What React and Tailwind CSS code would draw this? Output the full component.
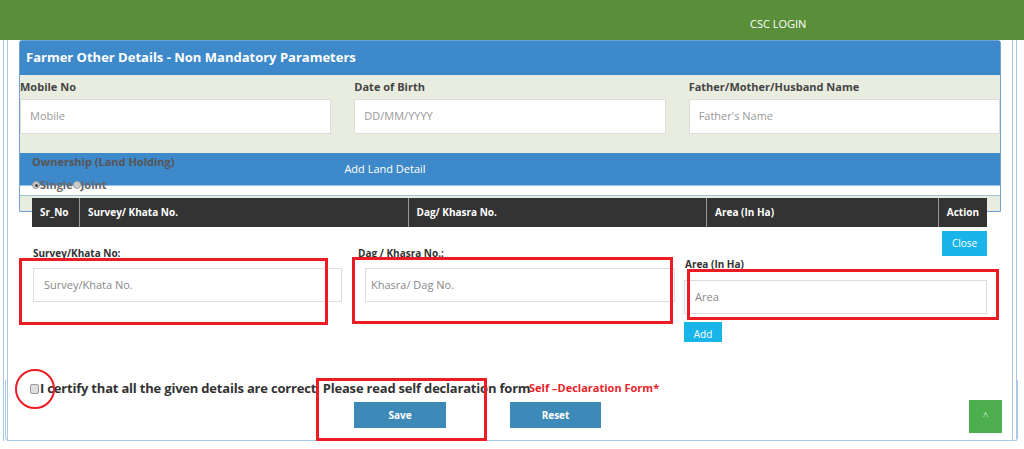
export default function App() {
  const f = { fontFamily: '"Open Sans", "Liberation Sans", sans-serif' };
  return (
    <div style={f} className="relative w-[1024px] h-[449px] overflow-hidden bg-white text-[#333]">
      <div className="h-[40px] bg-[#5a8f39] relative">
        <span className="absolute left-[750px] top-[16px] text-[11px] text-white">CSC LOGIN</span>
      </div>
      {/* outer frame lines */}
      <div className="absolute left-[3px] top-[40px] bottom-[8px] w-[5px] border-x border-[#a9c8e6]" />
      <div className="absolute left-[1012px] top-[40px] bottom-[8px] w-[5px] border-x border-[#a9c8e6]" />
      <div className="absolute left-[5px] right-[6px] top-[380px] h-[61px] border border-t-0 border-[#a9c8e6] rounded-b-[4px]" />

      <div className="ml-[19px] w-[982px] border border-[#6ea3d4] rounded-t-[3px]">
        <div className="h-[34px] bg-[#3e89c9] flex items-center pl-[6px] text-white font-bold text-[13px]">Farmer Other Details - Non Mandatory Parameters</div>
        <div className="bg-[#e8ede0] h-[78px] grid grid-cols-3 gap-[23px]">
          {[["Mobile No","Mobile"],["Date of Birth","DD/MM/YYYY"],["Father/Mother/Husband Name","Father's Name"]].map(([l,p])=>(
            <div key={l} className="pt-[4px]">
              <div className="text-[11px] font-bold h-[20px] text-[#444]">{l}</div>
              <div className="h-[35px] bg-white border border-[#ddd] flex items-center pl-[9px] text-[11px] text-[#999]">{p}</div>
            </div>
          ))}
        </div>
        <div className="relative h-[32px] bg-[#3e89c9] flex items-center justify-center pr-[250px] text-white text-[11px]">
          Add Land Detail
          <span className="absolute left-[12px] top-[1px] text-[11px] font-bold text-[#555]">Ownership (Land Holding)</span>
        </div>
        <div className="relative h-[11px] bg-white border-y border-[#9fc2e2]">
          <span className="absolute left-[12px] top-[-9px] flex items-center text-[11px] font-bold text-[#666]">
            <span className="w-[8px] h-[8px] rounded-full bg-[#ccc] border border-[#999] flex items-center justify-center"><span className="w-[3px] h-[3px] rounded-full bg-[#444]"/></span>Single
            <span className="w-[8px] h-[8px] rounded-full bg-[#ccc] border border-[#aaa]"/>Joint
          </span>
        </div>
        <div className="h-[15px] bg-[#e8ede0]" />
      </div>

      <div className="absolute left-[32px] top-[198px] w-[955px] h-[29px] bg-[#333] flex text-white text-[10px] font-bold">
        {[["Sr_No","w-[47px]"],["Survey/ Khata No.","w-[329px]"],["Dag/ Khasra No.","w-[299px]"],["Area (In Ha)","w-[232px]"],["Action","flex-1"]].map(([t,w],i)=>(
          <div key={t} className={`${w} flex items-center px-[8px] ${i?"border-l border-[#999]":""}`}>{t}</div>
        ))}
      </div>
      <div className="absolute left-[942px] top-[231px] w-[45px] h-[25px] bg-[#1ab5e8] text-white text-[10px] flex items-center justify-center">Close</div>

      <div className="absolute left-[33px] top-[246px] text-[10px] font-bold">Survey/Khata No:</div>
      <div className="absolute left-[358px] top-[246px] text-[10px] font-bold">Dag / Khasra No.:</div>
      <div className="absolute left-[685px] top-[257px] text-[10px] font-bold">Area (In Ha)</div>
      <div className="absolute left-[33px] top-[268px] w-[309px] h-[34px] bg-white border border-[#ddd] flex items-center pl-[10px] text-[11px] text-[#888]">Survey/Khata No.</div>
      <div className="absolute left-[365px] top-[268px] w-[310px] h-[34px] bg-white border border-[#ddd] flex items-center pl-[5px] text-[11px] text-[#888]">Khasra/ Dag No.</div>
      <div className="absolute left-[684px] top-[280px] w-[303px] h-[34px] bg-white border border-[#ddd] flex items-center pl-[10px] text-[11px] text-[#888]">Area</div>
      <div className="absolute left-[684px] top-[322px] w-[38px] h-[20px] bg-[#1ab5e8] text-white text-[10px] flex items-end justify-center">Add</div>

      <div className="absolute left-[30px] top-[384px] w-[9px] h-[10px] bg-[#ddd] border border-[#999] rounded-[2px]" />
      <div className="absolute left-[40px] top-[379px] text-[13px] font-bold text-[#333] tracking-[-0.2px]">I certify that all the given details are correct. Please read self declaration form</div>
      <div className="absolute left-[529px] top-[380px] text-[11px] font-bold text-[#e8232b]">Self –Declaration Form*</div>
      <div className="absolute left-[354px] top-[402px] w-[92px] h-[26px] bg-[#3d8ab9] text-white text-[10px] font-bold flex items-center justify-center">Save</div>
      <div className="absolute left-[510px] top-[402px] w-[91px] h-[26px] bg-[#3d8ab9] text-white text-[10px] font-bold flex items-center justify-center">Reset</div>
      <div className="absolute left-[969px] top-[400px] w-[33px] h-[33px] bg-[#4cae4c] text-white/70 text-[10px] flex items-center justify-center">^</div>

      {/* red annotations */}
      <div className="absolute left-[19px] top-[258px] w-[309px] h-[67px] border-[3px] border-[#ed1c24]" />
      <div className="absolute left-[352px] top-[257px] w-[321px] h-[67px] border-[3px] border-[#ed1c24]" />
      <div className="absolute left-[687px] top-[269px] w-[312px] h-[51px] border-[3px] border-[#ed1c24]" />
      <div className="absolute left-[316px] top-[378px] w-[171px] h-[63px] border-[3px] border-[#ed1c24]" />
      <div className="absolute left-[15px] top-[369px] w-[40px] h-[40px] rounded-full border-[2px] border-[#ed1c24]" />
    </div>
  );
}
